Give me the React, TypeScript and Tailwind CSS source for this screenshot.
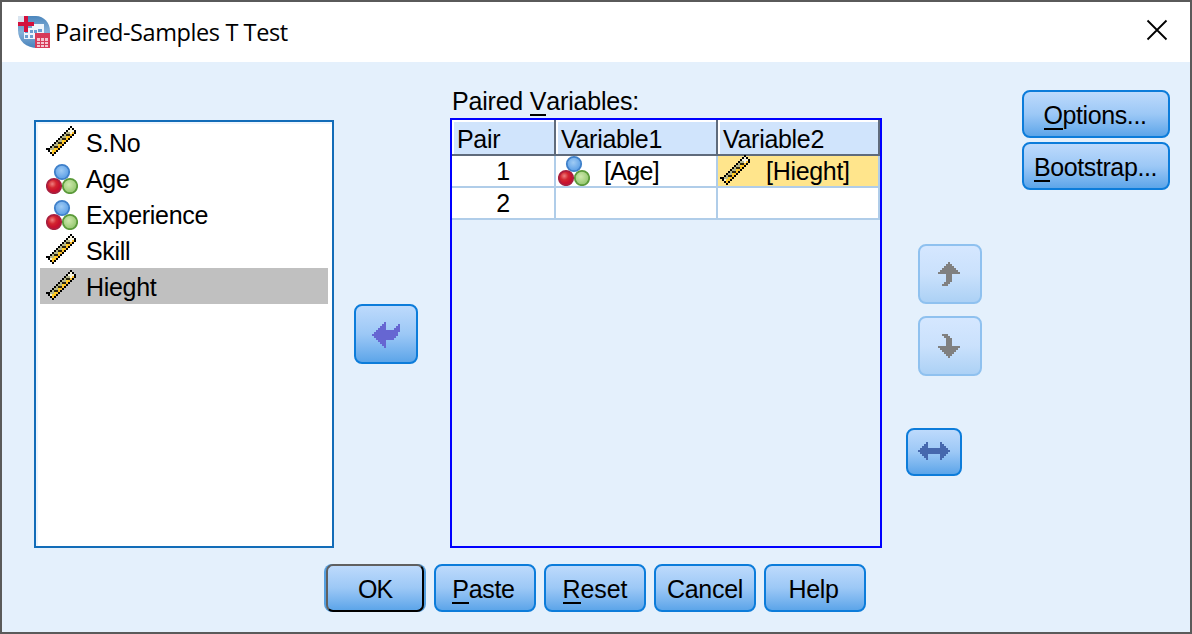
import type { ReactNode } from "react";

const diagonal = (sum: number, from: number, to: number, step = 1) => {
  let d = "";
  for (let x = from; x <= to; x += step) d += `M${x} ${sum - x}h1v1h-1z`;
  return d;
};

const RulerIcon = () => (
  <svg width="32" height="32" viewBox="0 0 16 16" shapeRendering="crispEdges" className="shrink-0">
    <path d={diagonal(13, 1, 12)} fill="#b3b488" />
    <path d={diagonal(14, 2, 12)} fill="#b3b488" />
    <path d={diagonal(15, 2, 13)} fill="#ffd21e" />
    <path d={diagonal(16, 3, 13)} fill="#ffbf2a" />
    <path d="M12 1h1v1h1v1h-1v1h-1V3h-1V2h1zM1 11h1v1h1v1H2v-1H1z" fill="#f8f4dc" />
    <path d={diagonal(14, 4, 11, 2) + diagonal(15, 5, 11, 2)} fill="#2d2710" />
    <path d={diagonal(12, 1, 12) + diagonal(17, 4, 14)} fill="#000" />
    <path d="M0 11h1v1H0zM1 12h1v1H1zM2 13h1v1H2zM3 14h1v1H3zM14 2h1v1h-1zM13 1h1v1h-1z" fill="#000" />
  </svg>
);

const NominalIcon = () => (
  <svg width="32" height="32" viewBox="0 0 32 32" className="shrink-0">
    <defs>
      <radialGradient id="ballBlue" cx=".45" cy=".4"><stop offset="0" stopColor="#9fcbf4" /><stop offset="1" stopColor="#65a5e8" /></radialGradient>
      <radialGradient id="ballRed" cx=".38" cy=".36"><stop offset="0" stopColor="#f08080" /><stop offset=".55" stopColor="#d32630" /><stop offset="1" stopColor="#c8102e" /></radialGradient>
      <radialGradient id="ballGreen" cx=".42" cy=".4"><stop offset="0" stopColor="#cfe8ad" /><stop offset="1" stopColor="#9dcc78" /></radialGradient>
    </defs>
    <circle cx="16" cy="10" r="7.2" fill="url(#ballBlue)" stroke="#3f80ca" strokeWidth="1.8" />
    <circle cx="24" cy="24" r="7.2" fill="url(#ballGreen)" stroke="#5b9a3a" strokeWidth="1.8" />
    <circle cx="8" cy="24" r="7.2" fill="url(#ballRed)" stroke="#a81f3f" strokeWidth="1.8" />
  </svg>
);

const AppIcon = () => (
  <svg width="32" height="32" viewBox="0 0 32 32" className="-mt-px shrink-0">
    <defs>
      <linearGradient id="globe" x1="0" y1="0" x2="0" y2="1"><stop offset="0" stopColor="#4b86bd" /><stop offset=".5" stopColor="#86b1d8" /><stop offset="1" stopColor="#4782bb" /></linearGradient>
    </defs>
    <path d="M5 0h13C26 0 32 7 32 15v17H20C8 32 0 25 0 14V5Z" fill="url(#globe)" />
    <path d="M0 0h7v6H0z" fill="#d9e4ef" />
    <path d="M6 12h4v11H6zM14 8h12v4H14zM10 12h16v6H10zM10 18h7v5h-7z" fill="#eef5fc" />
    <path d="M7 14h3v3H7zM12 14h3v3h-3zM16 14h3v3h-3zM20 13h4v3h-4zM7 19h3v3H7zM12 19h3v3h-3z" fill="#6b9ed0" />
    <path d="M0 6h6V0h4v6h6v4h-6v6H6v-6H0z" fill="#d3103d" />
    <path d="M17 17h15v15H17z" fill="#d73b58" />
    <path d="M19 22h3v3h-3zM23 22h3v3h-3zM27 22h3v3h-3zM19 26h3v2h-3zM23 26h3v2h-3zM27 26h3v2h-3zM19 29h3v2h-3zM23 29h3v2h-3zM27 29h3v2h-3z" fill="#f5c5cf" />
  </svg>
);

const FACE = "rounded-[8px] border-2 border-[#0c7cda] bg-linear-to-b from-[#bddafc] via-[#9cc8f6] to-[#5ca5e9]";
const FADED = "rounded-[8px] border-2 border-[#8fc1ef] bg-linear-to-b from-[#d5e7ff] via-[#cae1fc] to-[#acd1f5]";

const IconButton = ({ size, faded, label, children }: { size: string; faded?: boolean; label: string; children: ReactNode }) => (
  <button aria-label={label} disabled={faded} className={`flex items-center justify-center ${size} ${faded ? FADED : FACE}`}>
    {children}
  </button>
);

const TextButton = ({ mnemonic, text, className }: { mnemonic?: string; text: string; className: string }) => (
  <button className={`flex h-12 justify-center whitespace-nowrap pt-[8px] leading-[30px] ${FACE} ${className}`}>
    {mnemonic && <span className="h-[30px] border-b-2 border-black">{mnemonic}</span>}
    <span>{text}</span>
  </button>
);

const variables = [
  { name: "S.No", scale: true },
  { name: "Age", scale: false },
  { name: "Experience", scale: false },
  { name: "Skill", scale: true },
  { name: "Hieght", scale: true, selected: true },
];

const HEAD = "border-b-2 border-r-2 border-[#5f6b7c] bg-[#d0e4fc] pl-[5px] pt-[4px] leading-[31px] shadow-[inset_2px_2px_0_#fff]";
const CELL = "flex items-start border-b-2 border-r-2 border-[#b0cde9] leading-[31px]";

export default function App() {
  return (
    <div className="flex h-[634px] w-[1192px] flex-col overflow-hidden border-2 border-[#5a5a5a] bg-[#e4f0fc] font-['Liberation_Sans',Arial,sans-serif] text-[25px] tracking-[-0.3px] text-black">
      <header className="flex h-[60px] shrink-0 items-center bg-white pl-4 pr-[22px]">
        <AppIcon />
        <h1 className="ml-[5px] grow font-['Open_Sans','Noto_Sans',sans-serif] text-[23.5px] tracking-[-0.4px] leading-[32px]">Paired-Samples T Test</h1>
        <button aria-label="Close" className="-mt-[4px]">
          <svg width="22" height="22" viewBox="0 0 22 22" fill="none" stroke="#000" strokeWidth="1.8"><path d="m1.5 1.5 19 19m0-19-19 19" /></svg>
        </button>
      </header>

      <main className="flex h-[486px] shrink-0 pl-8 pr-5">
        <ul className="mt-[58px] h-[428px] w-[300px] border-2 border-[#126cb8] bg-white px-1 pt-[2px] shadow-[inset_2px_2px_0_#eef5fd]">
          {variables.map((v) => (
            <li key={v.name} className={`flex h-9 items-center pl-[6px] ${v.selected ? "bg-[#c0c0c0]" : ""}`}>
              {v.scale ? <RulerIcon /> : <NominalIcon />}
              <span className="ml-2 pt-[3px]">{v.name}</span>
            </li>
          ))}
        </ul>

        <div className="ml-5 mt-[242px]">
          <IconButton size="h-[60px] w-16" label="Move variable">
            <svg width="28" height="26" viewBox="0 0 14 13" shapeRendering="crispEdges" className="mt-[2px] fill-[#6666d2]"><path d="M6 0h1v4h4V3h1V2h1V1h1v4h-1v2h-1v1h-1v1H7v4H6v-1H5v-1H4v-1H3V9H2V8H1V7H0V6h1V5h1V4h1V3h1V2h1V1h1z" /></svg>
          </IconButton>
        </div>

        <section className="ml-8 flex w-[432px] flex-col pt-[26px]">
          <h2 className="flex h-[30px] pl-[2px] leading-[27px] tracking-[-0.2px]">
            <span>Paired&nbsp;</span><span className="h-[28px] border-b-2 border-black">V</span><span>ariables:</span>
          </h2>
          <div className="h-[430px] border-2 border-[#0000ff]">
            <div className="grid grid-cols-[104px_162px_162px] grid-rows-[36px_32px_32px] bg-white">
              <div className={HEAD}>Pair</div>
              <div className={HEAD}>Variable1</div>
              <div className={HEAD}>Variable2</div>
              <div className={`${CELL} justify-center`}>1</div>
              <div className={`${CELL} pl-[2px]`}><div className="-mt-[2px] h-8"><NominalIcon /></div><span className="ml-[14px] tracking-[-0.7px]">[Age]</span></div>
              <div className={`${CELL} bg-[#ffe58c] pl-[2px]`}><div className="-mt-px h-8"><RulerIcon /></div><span className="ml-[14px]">[Hieght]</span></div>
              <div className={`${CELL} justify-center`}>2</div>
              <div className={CELL} />
              <div className={CELL} />
            </div>
          </div>
        </section>

        <aside className="ml-6 flex w-[76px] flex-col pt-[182px]">
          <div className="flex flex-col gap-3 pl-3">
            <IconButton size="h-[60px] w-16" faded label="Move up">
              <svg width="22" height="24" viewBox="0 0 11 12" shapeRendering="crispEdges" className="-ml-[2px] fill-[#808080]"><path d="M5 0h1v1h1v1h1v1h1v1h1v1h1v1H7v4H6v1H5v1H2v-1h1v-1h1V6H0V5h1V4h1V3h1V2h1V1h1z" /></svg>
            </IconButton>
            <IconButton size="h-[60px] w-16" faded label="Move down">
              <svg width="22" height="24" viewBox="0 0 11 12" shapeRendering="crispEdges" className="-ml-[2px] fill-[#808080]"><path d="M2 0h3v1h1v1h1v4h4v1h-1v1H9v1H8v1H7v1H6v1H5v-1H4v-1H3V9H2V8H1V7H0V6h4V2H3V1H2z" /></svg>
            </IconButton>
          </div>
          <div className="mt-[52px]">
            <IconButton size="h-12 w-14" label="Swap variables">
              <svg width="32" height="18" viewBox="0 0 16 9" shapeRendering="crispEdges" className="-mt-[2px] fill-[#4668ae]"><path d="M4 0h1v3h6V0h1v1h1v1h1v1h1v1h1v1h-1v1h-1v1h-1v1h-1v1h-1V6H5v3H4V8H3V7H2V6H1V5H0V4h1V3h1V2h1V1h1z" /></svg>
            </IconButton>
          </div>
        </aside>

        <nav className="ml-10 flex flex-col gap-1 pt-7">
          <TextButton mnemonic="O" text="ptions..." className="w-[148px] pr-[2px] tracking-[-0.4px]" />
          <TextButton mnemonic="B" text="ootstrap..." className="w-[148px] pr-[1px] tracking-[-0.4px]" />
        </nav>
      </main>

      <footer className="flex gap-2 pl-[322px] pt-4">
        <div className="rounded-[8px] bg-[#559fdf] px-[2px]">
          <button className="flex h-12 w-[98px] justify-center rounded-[7px] border-2 border-b-black border-l-[#606060] border-r-black border-t-[#606060] bg-linear-to-b from-[#bddafc] via-[#9cc8f6] to-[#5ca5e9] pt-[8px] leading-[30px] tracking-[-1px]">OK</button>
        </div>
        <TextButton mnemonic="P" text="aste" className="w-[102px] pr-[3px]" />
        <TextButton mnemonic="R" text="eset" className="w-[102px] tracking-[-0.1px]" />
        <TextButton text="Cancel" className="w-[102px]" />
        <TextButton text="Help" className="w-[102px] pr-[3px]" />
      </footer>
    </div>
  );
}
